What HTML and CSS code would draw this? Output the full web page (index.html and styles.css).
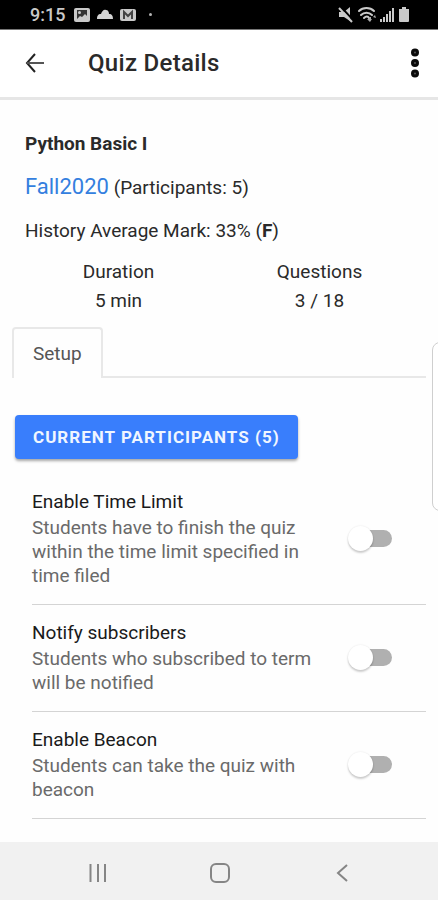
FILE: index.html
```html
<!DOCTYPE html>
<html lang="en">
<head>
<meta charset="utf-8">
<meta name="viewport" content="width=device-width, initial-scale=1">
<title>Quiz Details</title>
<link rel="stylesheet" href="styles.css">
</head>
<body>
<div class="status-bar">
  <div class="status-group">
    <span class="clock">9:15</span>
    <svg width="16" height="16" viewBox="0 0 16 16" aria-hidden="true"><rect x="0" y="1" width="16" height="14" rx="2" fill="#c9c9c9"/><path d="M3 3h10v6l-2-2-3 3-2-1-3 3z" fill="#333"/><circle cx="5.500" cy="5.500" r="1.500" fill="#c9c9c9"/></svg>
    <svg width="16" height="16" viewBox="0 0 16 16" aria-hidden="true"><path d="M0 12c0-3 1-5 4-5 1-3 3-5 5-4 2 0 3 2 3 4 3 0 4 2 4 5z" fill="#d4d4d4"/></svg>
    <svg width="16" height="16" viewBox="0 0 16 16" aria-hidden="true"><rect x="0" y="2" width="16" height="12" rx="2" fill="#c9c9c9"/><path d="M4 12V5l4 4 4-4v7" fill="none" stroke="#444" stroke-width="2"/></svg>
    <span class="more-dot"></span>
  </div>
  <div class="status-group status-signals">
    <svg width="16" height="18" viewBox="0 0 16 18" aria-hidden="true"><path d="M1 6h5l6-5v14l-6-4H1z" fill="#cacaca"/><path d="M3 1l13 14" stroke="#000" stroke-width="2"/><path d="M1 2l13 14" stroke="#cacaca" stroke-width="2"/></svg>
    <svg width="20" height="18" viewBox="0 0 20 18" aria-hidden="true"><g fill="none" stroke="#cacaca" stroke-width="2" stroke-linecap="round"><path d="M2 5c4-4 11-4 15 0M4 9c3-3 8-3 11 0M7 12c2-2 4-2 5 0"/></g><path d="M10 13h2v-2h2v2h1l-2 3zM16 11l2-2 1 3z" fill="#aaa"/></svg>
    <svg width="15" height="18" viewBox="0 0 15 18" aria-hidden="true"><path d="M0 13h2v3H0zM3 11h2v5H3zM6 8h2v8H6zM9 5h2v11H9zM12 2h2v14h-2z" fill="#cacaca"/></svg>
    <svg width="12" height="18" viewBox="0 0 12 18" aria-hidden="true"><path d="M4 1h4v2h3v12q0 1-1 1H2q-1 0-1-1V3h3z" fill="#cacaca"/></svg>
  </div>
</div>

<header class="toolbar">
  <button class="icon-button" type="button" aria-label="Back">
    <svg width="20" height="20" viewBox="0 0 20 20" aria-hidden="true"><path d="M10 1L2 10l8 9" fill="none" stroke="#222" stroke-width="2"/><path d="M2 10h17" stroke="#555" stroke-width="2"/></svg>
  </button>
  <h1 class="toolbar-title">Quiz Details</h1>
  <button class="icon-button" type="button" aria-label="More options">
    <svg width="10" height="30" viewBox="0 0 10 30" aria-hidden="true"><g fill="#555" stroke="#0b0b0b" stroke-width="3"><circle cx="5" cy="4.500" r="2.500"/><circle cx="5" cy="15" r="2.500"/><circle cx="5" cy="25.500" r="2.500"/></g></svg>
  </button>
</header>

<main class="content">
  <section class="summary">
    <h2 class="quiz-name">Python Basic I</h2>
    <p class="summary-line"><a class="term-link" href="#term">Fall2020</a> (Participants: 5)</p>
    <p class="summary-line">History Average Mark: 33% (<strong>F</strong>)</p>
  </section>
  <dl class="stats">
    <div><dt>Duration</dt><dd>5 min</dd></div>
    <div><dt>Questions</dt><dd>3 / 18</dd></div>
  </dl>
  <div class="tabs" role="tablist">
    <button class="tab" type="button" role="tab" aria-selected="true">Setup</button>
  </div>
  <button class="primary-button" type="button">CURRENT PARTICIPANTS (5)</button>
  <div class="settings">
    <label class="setting">
      <span class="setting-text"><span class="setting-title">Enable Time Limit</span><span class="setting-note">Students have to finish the quiz within the time limit specified in time filed</span></span>
      <input class="toggle" type="checkbox" role="switch">
    </label>
    <label class="setting">
      <span class="setting-text"><span class="setting-title">Notify subscribers</span><span class="setting-note">Students who subscribed to term will be notified</span></span>
      <input class="toggle" type="checkbox" role="switch">
    </label>
    <label class="setting">
      <span class="setting-text"><span class="setting-title">Enable Beacon</span><span class="setting-note">Students can take the quiz with beacon</span></span>
      <input class="toggle" type="checkbox" role="switch">
    </label>
  </div>
</main>
<div class="edge-handle"></div>

<nav class="system-nav" aria-label="System">
  <button type="button" aria-label="Recent apps"><svg width="20" height="20" viewBox="0 0 20 20" aria-hidden="true"><path d="M2.500 1v18M10 1v18M17 1v18" stroke="#858585" stroke-width="2"/></svg></button>
  <button type="button" aria-label="Home"><svg width="22" height="22" viewBox="0 0 22 22" aria-hidden="true"><rect x="2" y="2" width="18" height="18" rx="5" fill="none" stroke="#858585" stroke-width="2"/></svg></button>
  <button type="button" aria-label="Back"><svg width="20" height="20" viewBox="0 0 20 20" aria-hidden="true"><path d="M15 2L6 10l9 8" fill="none" stroke="#858585" stroke-width="2"/></svg></button>
</nav>
</body>
</html>
```
FILE: styles.css
```css
* {
  box-sizing: border-box;
}

body {
  position: relative;
  display: flex;
  flex-direction: column;
  min-height: 100vh;
  margin: 0;
  overflow-x: hidden;
  background: #fefefe;
  color: #2a2a2a;
  font-family: Roboto, "Liberation Sans", sans-serif;
  font-size: 19px;
}

h1, h2, p, dl, dd {
  margin: 0;
}

button {
  padding: 0;
  border: 0;
  background: none;
  color: inherit;
  font: inherit;
}

svg {
  display: block;
}

.status-bar {
  display: flex;
  justify-content: space-between;
  align-items: center;
  height: 30px;
  padding: 0 28px 0 30px;
  border-bottom: 1px solid #777;
  background: #000;
  color: #c9c9c9;
}

.status-group {
  display: flex;
  align-items: center;
  gap: 7px;
}

.status-signals {
  gap: 3px;
}

.clock {
  margin-right: 2px;
  font-size: 18px;
  font-weight: 500;
}

.more-dot {
  width: 3px;
  height: 3px;
  margin-left: 6px;
  border-radius: 50%;
  background: #b5b5b5;
}

.toolbar {
  display: flex;
  align-items: center;
  height: 70px;
  padding: 0 18px 2px 25px;
  border-bottom: 3px solid #e6e6e6;
  background: #fff;
}

.icon-button {
  display: flex;
}

.toolbar-title {
  flex: 1;
  margin-left: 43px;
  font-size: 24px;
  font-weight: 500;
  letter-spacing: 0.0125em;
}

.content {
  flex: 1;
  padding: 32px 12px 22px;
}

.summary {
  display: grid;
  gap: 19px;
  padding: 0 13px;
  line-height: 24px;
}

.quiz-name {
  font-size: 19px;
  font-weight: 700;
}

.term-link {
  color: #347fdf;
  font-size: 22px;
  text-decoration: none;
}

.stats {
  display: grid;
  grid-template-columns: 1fr 1fr;
  margin-top: 14px;
  padding: 0 6px;
  line-height: 29px;
  text-align: center;
}

.tabs {
  display: flex;
  margin-top: 12px;
}

.tabs::after {
  flex: 1;
  border-bottom: 2px solid #e8e8e8;
  content: "";
}

.tab {
  height: 51px;
  padding: 0 19px 1px;
  border: 2px solid #e8e8e8;
  border-bottom: 0;
  border-radius: 4px 4px 0 0;
  color: #555;
}

.primary-button {
  display: block;
  height: 44px;
  margin: 37px 3px 15px;
  padding: 0 18px 1px;
  border-radius: 4px;
  background: #397efc;
  box-shadow: 0 2px 3px rgb(0 0 0 / 35%);
  color: #f0f6ff;
  font-size: 17px;
  font-weight: 700;
  letter-spacing: 0.06em;
}

.settings {
  padding-left: 20px;
}

.setting {
  display: flex;
  justify-content: space-between;
  align-items: center;
  padding: 14px 34px 16px 0;
  border-bottom: 1px solid #d4d4d4;
}

.setting-text {
  width: 290px;
}

.setting-title,
.setting-note {
  display: block;
}

.setting-title {
  color: #1a1a1a;
  line-height: 28px;
}

.setting-note {
  color: #6a6a6a;
  line-height: 24px;
}

.toggle {
  display: flex;
  align-items: center;
  width: 32px;
  height: 17px;
  margin: 0;
  border-radius: 9px;
  appearance: none;
  background: #b0b0b0;
}

.toggle::before {
  flex: none;
  width: 25px;
  height: 25px;
  margin-left: -12px;
  border-radius: 50%;
  background: #fff;
  box-shadow: 0 2px 2px rgb(0 0 0 / 18%), 0 0 2px rgb(0 0 0 / 10%);
  content: "";
}

.toggle:checked {
  justify-content: flex-end;
  background: #9cbffd;
}

.toggle:checked::before {
  background: #397efc;
}

/* Pull-out handle that overlaps the right screen edge */
.edge-handle {
  position: absolute;
  top: 342px;
  right: -10px;
  width: 16px;
  height: 169px;
  border: 1px solid #cfcfcf;
  border-radius: 8px;
  background: #fff;
}

.system-nav {
  display: flex;
  justify-content: space-around;
  align-items: center;
  height: 58px;
  padding: 3px 35px 0 37px;
  background: #f1f1f1;
}
```
